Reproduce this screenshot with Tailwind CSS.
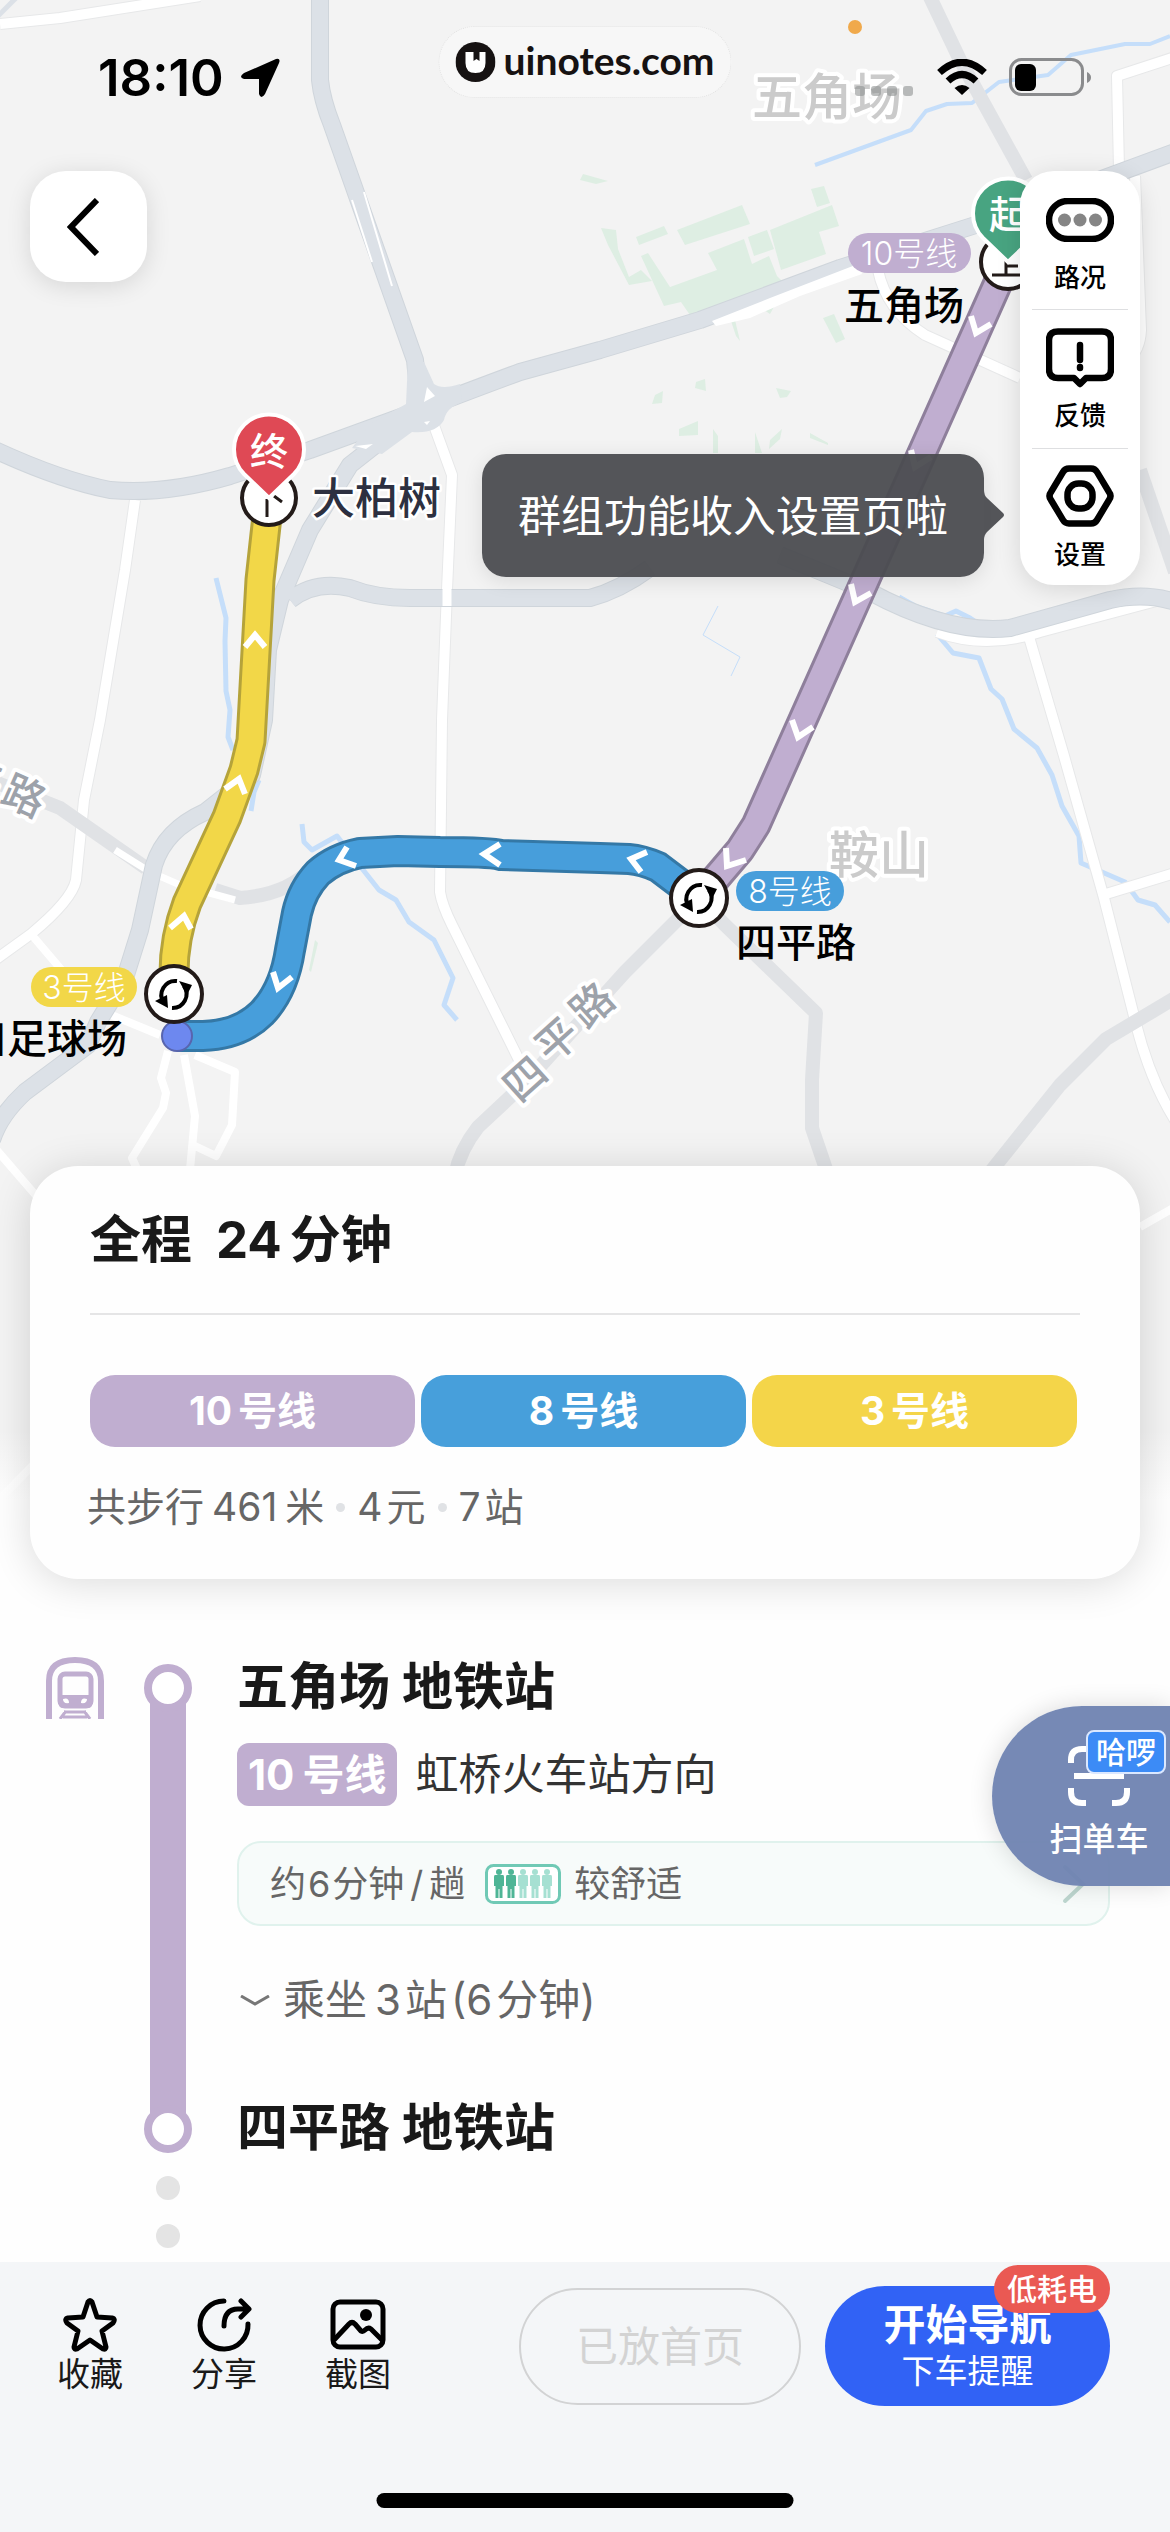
<!DOCTYPE html>
<html lang="zh-CN">
<head>
<meta charset="UTF-8" />
<meta name="viewport" content="width=device-width, initial-scale=1.0"/>
<title>地铁路线</title>
<script src="https://cdn.jsdelivr.net/npm/@tailwindcss/browser@4"></script>
</head>
<body class="bg-[#fefefe] font-['Inter','Noto_Sans_CJK_SC',sans-serif] text-[#191919]">
<div class="relative flex min-h-screen flex-col overflow-hidden">

  <!-- Map -->
  <div class="absolute inset-x-0 top-0 h-[1500px] overflow-hidden bg-[#f3f3f3]">
    <svg class="h-full w-full" viewBox="0 0 1170 1500" preserveAspectRatio="xMidYMin slice" aria-label="地图">
      <!-- Parks -->
      <g fill="#deeee3">
        <path d="M677 230 742 205 750 224 685 245Z"/>
        <path d="M811 189 824 186 830 203 817 207Z"/>
        <path d="M770 230 832 205 839 226 819 232 826 254 781 270Z"/>
        <path d="M748 237 767 230 774 249 754 256Z"/>
        <path d="M708 253 744 239 752 264 769 256 777 276 786 285 770 314 750 300 735 320 740 341 736 336 728 312 692 318 681 302 664 306 641 256 648 253 670 287 717 270Z"/>
        <path d="M636 237 664 226 668 234 639 245Z"/>
        <path d="M601 228 616 230 618 249 629 277 641 270 652 281 629 285 608 245Z"/>
        <path d="M823 318 834 314 845 339 836 343Z"/>
        <path d="M583 174 608 181 596 184 580 180Z"/>
        <path d="M696 382 705 379 706 391 695 388ZM655 395 663 391 662 403 652 404ZM776 388 791 391 787 397 780 398ZM679 429 698 421 698 435 679 436ZM713 429 718 436 718 453 713 453ZM770 440 782 429 780 439 769 449ZM810 433 828 443 828 445 810 438ZM755 432 762 453 755 453Z"/>
        <path d="M315 940 318 943 311 972 309 970Z"/>
      </g>

      <!-- Water -->
      <g fill="none" stroke="#c5defa" stroke-width="5" stroke-linejoin="round">
        <path d="M815 165 911 130 926 111 947 104 972 103 999 82 1048 75 1071 55 1125 44H1150L1170 36" stroke-width="4"/>
        <path d="M216 578 226 618 225 641 226 691 230 710 228 737 233 750"/>
        <path d="M259 780 254 792 251 811"/>
        <path d="M302 824 304 842 312 850 337 836 364 871 379 890 396 900 409 922 434 940 453 978 444 1005 457 1020"/>
        <path d="M899 597 915 606 945 616 956 611 970 618 985 628M937 634 953 653 979 658 991 689 1002 699 1014 729 1037 748 1052 775 1062 806 1079 836 1081 863 1125 882 1138 900 1155 905 1170 922"/>
        <path d="M718 606 703 635 740 657 731 676" stroke-width="1"/>
      </g>

      <!-- Minor roads -->
      <g fill="none" stroke="#e7e8e9" stroke-width="12" stroke-linejoin="round">
        <path d="M0 24 60 18 200 -4M135 500 125 570 100 720 84 800 76 880Q72 900 31 934L-5 960M432 420 452 475 447 590 442 720 440 892Q442 905 452 925L520 1062M1119 170 1117 76 1175 57M1135 176 1141 330Q1140 350 1128 360M878 270Q886 310 925 335L1020 378M1029 637 1064 756 1104 898 1136 1024Q1150 1080 1175 1120M1106 894 1175 873M937 632Q985 650 1040 632L1175 596"/>
      </g>
      <path d="M0 24 60 18 200 -4M135 500 125 570 100 720 84 800 76 880Q72 900 31 934L-5 960M432 420 452 475 447 590 442 720 440 892Q442 905 452 925L520 1062M1119 170 1117 76 1175 57M1135 176 1141 330Q1140 350 1128 360M878 270Q886 310 925 335L1020 378M1029 637 1064 756 1104 898 1136 1024Q1150 1080 1175 1120M1106 894 1175 873M937 632Q985 650 1040 632L1175 596" fill="none" stroke="#fff" stroke-width="10" stroke-linejoin="round"/>
      <path d="M168 1051 161 1078 166 1093 163 1108 132 1158 142 1180M184 1055 195 1116 189 1180M195 1055 235 1072 232 1125 216 1156 195 1146M109 1014 160 1035M31 934 65 974M-5 1148 45 1206M-5 1504 40 1458M1140 1227 1175 1207" fill="none" stroke="#fff" stroke-width="8" stroke-linejoin="round"/>

      <!-- Secondary roads -->
      <g fill="none" stroke="#e0e2e5" stroke-width="14" stroke-linejoin="round">
        <path d="M929 -5 960 60 1026 180M1140 470 1175 572M-5 782 60 808 146 868M215 890 240 898Q285 895 310 870M699 898 625 972 525 1083 478 1127Q460 1150 455 1175M699 898 725 925 816 1013 812 1080 812 1128 828 1175M1175 998 1106 1039 1060 1085 988 1175"/>
      </g>
      <path d="M115 850 150 872 180 885 235 900" fill="none" stroke="#fff" stroke-width="7"/>

      <!-- Expressways -->
      <g fill="none" stroke-linejoin="round">
        <path d="M320 -5V80Q322 100 332 125L415 360 420 410M420 410Q450 398 520 372L600 350 700 320 840 268 985 222 1175 152M420 410 310 450 230 476Q165 495 110 490 60 480 -5 450M420 410 350 465 310 530 280 600 268 650 264 720 252 775 205 812Q165 830 154 865L140 930 125 978 98 1022 88 1045 25 1092Q0 1115 -8 1140M290 600Q315 580 350 588 375 598 410 598H590Q620 590 650 568M780 555 870 592Q950 635 1010 628L1110 600Q1145 592 1175 602" stroke="#cfd5db" stroke-width="18"/>
        <path d="M320 -5V80Q322 100 332 125L415 360 420 410M420 410Q450 398 520 372L600 350 700 320 840 268 985 222 1175 152M420 410 310 450 230 476Q165 495 110 490 60 480 -5 450M420 410 350 465 310 530 280 600 268 650 264 720 252 775 205 812Q165 830 154 865L140 930 125 978 98 1022 88 1045 25 1092Q0 1115 -8 1140M290 600Q315 580 350 588 375 598 410 598H590Q620 590 650 568M780 555 870 592Q950 635 1010 628L1110 600Q1145 592 1175 602" stroke="#dce1e7" stroke-width="16"/>
      </g>
      <path d="M408 360 424 362 434 384Q442 390 460 384L462 402Q446 408 444 420 436 434 412 432L382 454 352 448 370 424 406 404Z" fill="#dce1e7"/>
      <path d="M427 387 435 396 424 402ZM424 422 430 421 427 425ZM355 446 373 444 366 449Z" fill="#fff"/>
      <path d="M712 321 770 298 858 264 862 274 800 296 750 318 716 326Z" fill="#fff"/>
      <path d="M364 192 392 286M352 200 372 262" stroke="#fff" stroke-width="2"/>
      <path d="M447 588V606" stroke="#fff" stroke-width="9"/>
      <path d="M-2 16 18 -4" stroke="#dce1e7" stroke-width="5"/>

      <!-- District and road names -->
      <g stroke="#fff" stroke-width="8" stroke-linejoin="round" paint-order="stroke" font-weight="500">
        <g fill="#cbcbcb" font-size="50">
          <text x="752" y="115">五角场</text>
          <text x="829" y="873">鞍山</text>
        </g>
        <g fill="#9da2aa" font-size="42" text-anchor="middle">
          <text transform="translate(525 1079) rotate(-42)" y="15">四</text>
          <text transform="translate(557 1040) rotate(-42)" y="15">平</text>
          <text transform="translate(592 1005) rotate(-42)" y="15">路</text>
          <text transform="translate(24 796) rotate(24)" y="15">路</text>
          <text transform="translate(-20 778) rotate(24)" y="15">平</text>
        </g>
      </g>

      <!-- Metro lines -->
      <g fill="none" stroke-linejoin="round">
        <path d="M699 898 658 867Q642 860 629 859L600 858 501 855Q490 852 440 852L398 851 360 853Q335 858 318 873 302 890 297 913L290 950Q284 990 262 1013 240 1035 203 1036H177" stroke="#3478a6" stroke-width="32"/>
        <path d="M699 898 658 867Q642 860 629 859L600 858 501 855Q490 852 440 852L398 851 360 853Q335 858 318 873 302 890 297 913L290 950Q284 990 262 1013 240 1035 203 1036H177" stroke="#479edb" stroke-width="26"/>
        <path d="M1008 260 997 285 756 825 740 850 717 877 699 898" stroke="#8e7f9b" stroke-width="31"/>
        <path d="M1008 260 997 285 756 825 740 850 717 877 699 898" stroke="#c0aed0" stroke-width="25"/>
        <path d="M269 498 260 580 251 741 244 770 227 817 187 903Q173 940 174 980" stroke="#b5a33a" stroke-width="31"/>
        <path d="M269 498 260 580 251 741 244 770 227 817 187 903Q173 940 174 980" stroke="#f2d748" stroke-width="25"/>
      </g>
      <!-- Direction arrows -->
      <g fill="none" stroke="#fff" stroke-width="6">
        <path d="M245 647 255 635 265 647"/>
        <path d="M225 789 239 779 245 794"/>
        <path d="M170 928 184 916 191 929"/>
        <path d="M273 972 278 988 292 977"/>
        <path d="M356 866 339 860 347 847"/>
        <path d="M500 865 484 854 500 844"/>
        <path d="M641 872 631 859 647 852"/>
        <path d="M971 316 976 333 991 324"/>
        <path d="M851 584 855 602 871 593"/>
        <path d="M792 720 798 737 813 727"/>
        <path d="M726 848 727 866 746 860"/>
        <path d="M911 450 915 467 931 457"/>
      </g>
      <circle cx="177" cy="1036" r="15" fill="#6d88ef" stroke="#5865ae" stroke-width="2"/>

      <!-- Stations -->
      <g fill="#fff" stroke="#231b19" stroke-width="4">
        <circle cx="269" cy="498" r="27"/>
        <circle cx="1008" cy="262" r="27"/>
        <circle cx="174" cy="994" r="28"/>
        <circle cx="699" cy="898" r="28"/>
      </g>
      <path d="M267 499V517M274 496 282 502M1006 258V275M992 275H1024M1006 266H1018" stroke="#231b19" stroke-width="3"/>
      <g id="transfer">
        <path d="M177 981A14 14 0 0 0 164 1003M172 1008A14 14 0 0 0 184 986" fill="none" stroke="#000" stroke-width="4"/>
        <path d="M155 1001 168 1008 167 995ZM179 981 192 985 187 995Z"/>
      </g>
      <use href="#transfer" x="525" y="-96"/>

      <!-- Start and end pins -->
      <g stroke="#fff" stroke-width="4">
        <path d="M269 498 244 474A35 35 0 1 1 294 474Z" fill="#df4955"/>
        <path d="M1008 262 983 238A35 35 0 1 1 1033 238Z" fill="#48a481"/>
      </g>
      <g fill="#fff" font-size="38" font-weight="500" text-anchor="middle">
        <text x="269" y="465">终</text>
        <text x="1008" y="228">起</text>
      </g>

      <!-- Station names -->
      <g font-size="32" fill="#fff" font-weight="300" text-anchor="middle">
        <rect x="848" y="233" width="123" height="40" rx="20" fill="#c0aed0"/>
        <text x="909" y="265">10号线</text>
        <rect x="736" y="871" width="108" height="40" rx="20" fill="#479edb"/>
        <text x="790" y="903">8号线</text>
        <rect x="31" y="967" width="106" height="40" rx="20" fill="#f2d748"/>
        <text x="84" y="999">3号线</text>
      </g>
      <g font-size="40" font-weight="500" fill="#000">
        <text x="844" y="320">五角场</text>
        <text x="736" y="957">四平路</text>
        <text x="127" y="1053" text-anchor="end">虹口足球场</text>
      </g>
      <text x="312" y="514" font-size="43" font-weight="500" fill="#2d3040" stroke="#fff" stroke-width="5" stroke-linejoin="round" paint-order="stroke">大柏树</text>
    </svg>
    <div class="absolute inset-x-0 bottom-0 h-[70px] bg-linear-to-b from-[#fefefe]/0 to-[#fefefe]"></div>
  </div>

  <div class="relative min-h-[1166px]">
    <!-- Status bar -->
    <div class="relative flex h-[171px] items-start justify-between pl-[98px] pr-[78px] text-black">
      <div class="flex items-center gap-4 pt-[46px]">
        <span class="text-[51px] font-semibold leading-[64px]">18:10</span>
        <svg class="size-10" viewBox="0 0 40 40"><path d="M36 1Q41 0 39 5L25 36Q21 42 19 36V21H4Q-2 19 4 15Z"/></svg>
      </div>
      <a href="#" class="absolute left-1/2 top-[26px] flex h-[72px] -translate-x-1/2 items-center gap-2 rounded-full border border-dotted border-[#e2e2e2] bg-[#f7f7f7] px-4 font-['Lato'] text-[39px] font-bold text-[#161212]">
        <svg class="size-10" viewBox="0 0 40 40"><circle cx="20" cy="20" r="20" fill="#161212"/><path d="M10 10H18V19L21 17 24 19V10H30V21Q30 31 20 31 10 31 10 21Z" fill="#fff"/></svg>
        <span class="pb-1">uinotes.com</span>
      </a>
      <span class="absolute right-[308px] top-5 size-[14px] rounded-full bg-[#f0a94b]"></span>
      <div class="flex items-center pt-[58px]">
        <div class="mr-6 mt-7 flex gap-[6px]">
          <span class="size-[10px] rounded-[3px] bg-[#8f9292]/60"></span>
          <span class="size-[10px] rounded-[3px] bg-[#8f9292]/60"></span>
          <span class="size-[10px] rounded-[3px] bg-[#8f9292]/60"></span>
          <span class="size-[10px] rounded-[3px] bg-[#8f9292]/60"></span>
        </div>
        <svg class="mr-[22px] h-[37px] w-[50px]" viewBox="0 0 50 37">
          <g fill="none" stroke="#000" stroke-width="7"><path d="M2.500 13.500Q25 -7 47.500 13.500"/><path d="M11 22Q25 9 39 22"/></g>
          <path d="M25 36 17.500 29Q25 23 32.500 29Z"/>
        </svg>
        <svg class="h-[38px] w-[83px]" viewBox="0 0 83 38">
          <rect x="1.500" y="1.500" width="72" height="35" rx="11" fill="none" stroke="#8a8b8d" stroke-width="3"/>
          <rect x="6" y="6" width="21" height="27" rx="6"/>
          <path d="M78 14Q82 16 82 19.500 82 23 78 25Z" fill="#8a8b8d"/>
        </svg>
      </div>
    </div>

    <!-- Map controls -->
    <div class="flex items-start justify-between px-[30px]">
      <button aria-label="返回" class="flex h-[111px] w-[117px] items-center justify-center rounded-[36px] bg-white pr-3 shadow-[0_4px_24px_rgba(0,0,0,0.12)]">
        <svg class="h-[58px] w-8" viewBox="0 0 32 58" fill="none" stroke="#000" stroke-width="6"><path d="M30 2 4 29 30 56"/></svg>
      </button>
      <div class="relative w-[120px] rounded-[34px] bg-white px-3 text-[26px] font-medium leading-[38px] text-black shadow-[0_4px_24px_rgba(0,0,0,0.12)]">
        <button class="flex h-[138px] w-full flex-col items-center pt-[27px]">
          <svg class="h-[44px] w-[68px]" viewBox="0 0 68 44"><rect x="3" y="3" width="62" height="38" rx="19" fill="none" stroke="#000" stroke-width="6.500"/><g fill="#858585"><circle cx="18.500" cy="22" r="6.500"/><circle cx="34" cy="22" r="6.500"/><circle cx="49.500" cy="22" r="6.500"/></g></svg>
          <span class="mt-[17px]">路况</span>
        </button>
        <button class="flex h-[139px] w-full flex-col items-center border-t border-[#dedfe1] pt-[18px]">
          <svg class="h-[60px] w-[68px]" viewBox="0 0 68 60" fill="none" stroke="#000" stroke-width="6.500" stroke-linejoin="round"><path d="M12 3.500H56Q65 3.500 65 12V41Q65 50 56 50H40L34 56 28 50H12Q3 50 3 41V12Q3 3.500 12 3.500Z"/><path d="M34 17V32M34 39V40" stroke-linecap="round"/></svg>
          <span class="mt-[9px]">反馈</span>
        </button>
        <button class="flex h-[137px] w-full flex-col items-center border-t border-[#dedfe1] pt-4">
          <svg class="h-[62px] w-[68px]" viewBox="0 0 68 62" fill="none" stroke="#000" stroke-width="6.500" stroke-linejoin="round"><path d="M23 3.500H45Q49 3.500 51 7L63 27Q66 31 63 35L51 55Q49 58.500 45 58.500H23Q19 58.500 17 55L5 35Q2 31 5 27L17 7Q19 3.500 23 3.500Z"/><rect x="21.500" y="18.500" width="25" height="25" rx="11"/></svg>
          <span class="mt-[9px]">设置</span>
        </button>
        <div role="tooltip" class="absolute right-[156px] top-[283px] flex h-[123px] items-center whitespace-nowrap rounded-[24px] bg-[#4b4c50]/95 px-[36px] text-[43px] font-normal text-white shadow-[0_4px_20px_rgba(0,0,0,0.1)]">
          群组功能收入设置页啦
          <svg class="absolute left-full top-9 h-[50px] w-5" viewBox="0 0 20 50" fill="#4b4c50" fill-opacity=".95"><path d="M0 0Q0 5 3 8L19 23Q21 25 19 27L3 42Q0 45 0 50Z"/></svg>
        </div>
      </div>
    </div>
  </div>

  <!-- Trip summary -->
  <section class="relative mx-[30px] rounded-[48px] bg-[#fefefe] px-[60px] pb-[42px] pt-[39px] shadow-[0_4px_40px_rgba(0,0,0,0.14)]">
    <h1 class="flex items-center text-[51px] font-bold leading-[70px]"><span class="mr-6">全程</span><span class="mr-2">24</span><span>分钟</span></h1>
    <div class="mt-[38px] h-[2px] bg-[#e5e5e6]"></div>
    <div class="mr-[3px] mt-[60px] grid grid-cols-3 gap-[6px] text-[39px] font-bold leading-[72px] text-white">
      <div class="flex justify-center gap-[6px] rounded-[25px] bg-[#c0aed0]"><span>10</span><span>号线</span></div>
      <div class="flex justify-center gap-[6px] rounded-[25px] bg-[#479fdb]"><span>8</span><span>号线</span></div>
      <div class="flex justify-center gap-[6px] rounded-[25px] bg-[#f4d549]"><span>3</span><span>号线</span></div>
    </div>
    <div class="-ml-[3px] mt-[30px] flex items-center text-[39px] leading-[60px] text-[#666]">
      <span class="mr-2">共步行</span><span class="mr-2">461</span><span>米</span>
      <span class="mx-3 size-[9px] rounded-full bg-[#e0e2e5]"></span>
      <span class="mr-1">4</span><span>元</span>
      <span class="mx-3 size-[9px] rounded-full bg-[#e0e2e5]"></span>
      <span class="mr-1">7</span><span>站</span>
    </div>
  </section>

  <!-- Steps -->
  <section class="relative pl-[46px] pr-[60px] pt-[78px]">
    <div class="flex">
      <svg class="h-[62px] w-[58px]" viewBox="0 0 58 62" fill="none" stroke="#c0aed0">
        <path d="M3 62V24Q3 3 29 3T55 24V62" stroke-width="6"/>
        <rect x="14" y="17" width="31" height="32" rx="5" stroke-width="5"/>
        <path d="M13 38H46V47Q46 51 42 51H17Q13 51 13 47Z" fill="#c0aed0" stroke="none"/>
        <path d="M17 42Q23 40 23 46 17 47 17 42ZM41 42Q35 40 35 46 41 47 41 42Z" fill="#fff" stroke="none"/>
        <path d="M20 54 14 62M38 54 44 62M18 55H40M17 60H41" stroke-width="3"/>
      </svg>
      <div class="ml-[40px] flex w-12 flex-col items-center pb-[5px] pt-[7px]">
        <span class="relative z-10 size-12 shrink-0 rounded-full border-8 border-[#c0aed0] bg-white"></span>
        <span class="-my-3 w-9 flex-1 bg-[#c0aed0]"></span>
        <span class="relative z-10 size-12 shrink-0 rounded-full border-8 border-[#c0aed0] bg-white"></span>
      </div>
      <div class="ml-[45px] flex-1">
        <h2 class="text-[51px] font-bold leading-[60px]">五角场 地铁站</h2>
        <div class="mt-[26px] flex items-center gap-[18px]">
          <span class="flex gap-2 rounded-[12px] bg-[#c0aed0] px-[11px] text-[42px] font-bold leading-[63px] text-white"><span>10</span><span>号线</span></span>
          <span class="text-[43px] leading-[63px] text-[#333]">虹桥火车站方向</span>
        </div>
        <button class="mt-[35px] flex h-[85px] w-full items-center rounded-[24px] border-2 border-[#e0f2ed] bg-[#f7fbfa] pl-[31px] pr-[22px] text-[36px] text-[#666]">
          <span class="mr-[2px]">约</span><span class="mr-[2px]">6</span><span>分钟</span><span class="mx-[6px]">/</span><span>趟</span>
          <svg class="ml-5 mr-[13px] h-[40px] w-[76px]" viewBox="0 0 76 40">
            <rect x="1.500" y="1.500" width="73" height="37" rx="7" fill="#fff" stroke="#70c9b5" stroke-width="3"/>
            <g fill="#4fb596"><g id="man"><circle cx="14" cy="8" r="3"/><path d="M10 11H18Q19 11 19 13V22H17.500V34H14.500V25H13.500V34H10.500V22H9V13Q9 11 10 11Z"/></g><use href="#man" x="12"/></g>
            <g fill="#a6e0d2"><circle cx="38" cy="8" r="3"/><circle cx="50" cy="8" r="3"/><circle cx="62" cy="8" r="3"/><path d="M34 11H42Q43 11 43 13V22H41.500V34H38.500V25H37.500V34H34.500V22H33V13Q33 11 34 11ZM46 11H54Q55 11 55 13V22H53.500V34H50.500V25H49.500V34H46.500V22H45V13Q45 11 46 11ZM58 11H66Q67 11 67 13V22H65.500V34H62.500V25H61.500V34H58.500V22H57V13Q57 11 58 11Z"/></g>
          </svg>
          <span>较舒适</span>
          <svg class="ml-auto h-[40px] w-[24px]" viewBox="0 0 24 40" fill="none" stroke="#bdd6cf" stroke-width="4" stroke-linecap="round"><path d="M3 3 21 20 3 37"/></svg>
        </button>
        <button class="mt-[44px] flex items-center text-[42px] leading-[60px] text-[#666]">
          <svg class="ml-[3px] mr-[13px] h-[11px] w-[30px]" viewBox="0 0 30 11" fill="none" stroke="#777" stroke-width="3"><path d="M1 1 15 9 29 1"/></svg>
          <span class="mr-2">乘坐</span><span class="mr-1">3</span><span class="mr-1">站</span><span class="mr-1">(6</span><span>分钟)</span>
        </button>
        <h2 class="mt-[68px] text-[51px] font-bold leading-[60px]">四平路 地铁站</h2>
      </div>
    </div>
    <div class="ml-[98px] mt-[18px] flex w-12 flex-col items-center gap-6 pb-[14px]">
      <span class="size-6 rounded-full bg-[#e4e4e4]"></span>
      <span class="size-6 rounded-full bg-[#e4e4e4]"></span>
    </div>

    <!-- Floating scan button -->
    <button class="absolute right-0 top-[127px] flex h-[180px] w-[178px] flex-col items-center rounded-l-[90px] bg-[#6f83b1]/95 pl-9 pt-[39px] text-white shadow-[0_0_24px_rgba(0,0,0,0.14)]">
      <svg class="h-[62px] w-[62px]" viewBox="0 0 62 62" fill="none" stroke="#fff" stroke-width="6"><path d="M3 18V15Q3 4 14 4H18M44 4H48Q59 4 59 15V18M3 43V47Q3 58 14 58H18M44 58H48Q59 58 59 47V43M6 31H56"/></svg>
      <span class="mt-[10px] text-[33px] font-medium leading-[44px]">扫单车</span>
      <span class="absolute right-1 top-6 rounded-[8px] border-2 border-[#dbe8ff] bg-[#3c8bf6] px-2 text-[30px] font-medium leading-[40px]">哈啰</span>
    </button>
  </section>

  <!-- Bottom bar -->
  <footer class="relative flex min-h-[270px] flex-1 items-start bg-[#f4f6f8] pl-[57px] pr-[60px] pt-6">
    <div class="flex gap-[68px] pt-[10px] text-[33px] leading-[44px]">
      <button class="flex flex-col items-center">
        <svg class="h-[56px] w-[56px]" viewBox="0 0 56 56" fill="none" stroke="#000" stroke-width="5" stroke-linejoin="round"><path d="M26 6Q28 3 30 6L35 21 50 22Q54 23 51 27L40 35 44 51Q44 54 41 53L28 44 15 53Q12 54 12 51L16 35 5 27Q2 23 6 22L21 21Z"/></svg>
        <span>收藏</span>
      </button>
      <button class="flex flex-col items-center">
        <svg class="h-[56px] w-[56px]" viewBox="0 0 56 56" fill="none" stroke="#000" stroke-width="5" stroke-linecap="round" stroke-linejoin="round"><path d="M28 5A24 24 0 1 0 52 28"/><path d="M28 30Q28 13 42 13H52M45 5 53 13 45 21"/></svg>
        <span>分享</span>
      </button>
      <button class="flex flex-col items-center">
        <svg class="h-[56px] w-[56px]" viewBox="0 0 56 56" fill="none" stroke="#000" stroke-width="5" stroke-linejoin="round"><rect x="3" y="6" width="50" height="45" rx="7"/><path d="M4 44 19 28Q22 25 25 28L31 35Q33 36 35 34 38 31 41 33L53 45"/><circle cx="36" cy="19" r="6" fill="#000" stroke="none"/></svg>
        <span>截图</span>
      </button>
    </div>
    <button disabled class="ml-auto mt-[2px] h-[117px] w-[282px] rounded-full border-2 border-[#d2d3d4] text-[42px] text-[#d3d3d3]">已放首页</button>
    <button class="relative ml-6 flex h-[120px] w-[285px] flex-col items-center rounded-full bg-[#3162f5] pt-[14px] text-white">
      <span class="text-[42px] font-bold leading-[50px]">开始导航</span>
      <span class="text-[33px] leading-[42px]">下车提醒</span>
      <span class="absolute -top-[21px] right-0 rounded-full bg-[#ea5953] px-[13px] text-[30px] font-medium leading-[48px]">低耗电</span>
    </button>
    <div class="absolute bottom-6 left-1/2 h-[15px] w-[417px] -translate-x-1/2 rounded-full bg-black"></div>
  </footer>
</div>
</body>
</html>
